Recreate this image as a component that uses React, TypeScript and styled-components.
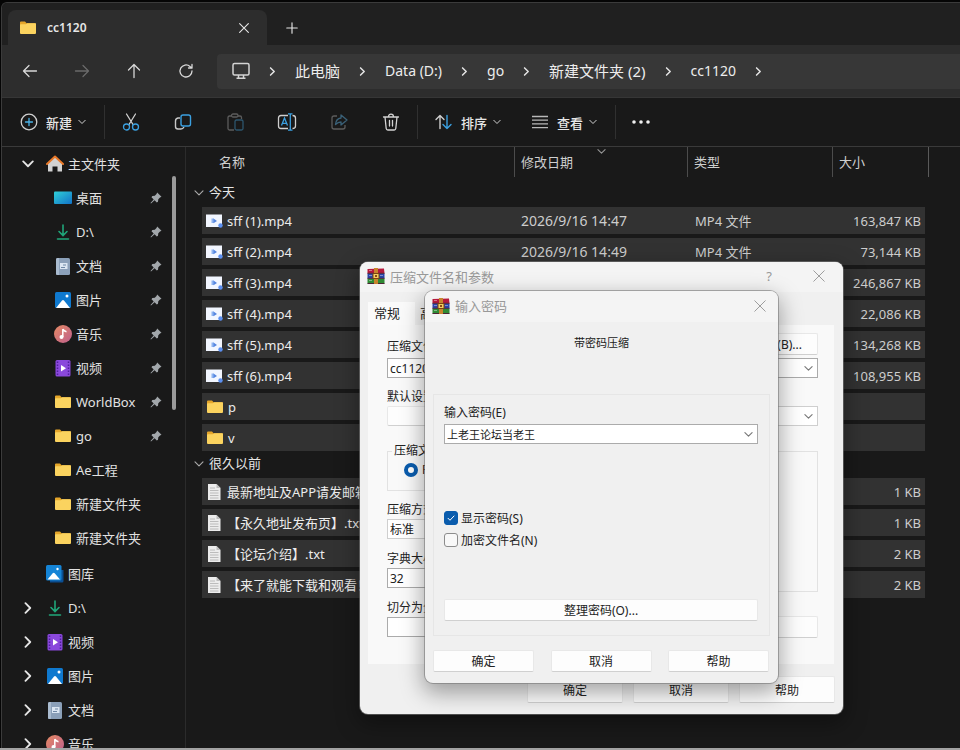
// App.tsx

import React from 'react';
import styled, { createGlobalStyle } from 'styled-components';

const GlobalStyle = createGlobalStyle`
  * {
    box-sizing: border-box;
  }

  body {
    margin: 0;
    background: #050505;
    font-family: 'Noto Sans', 'Noto Sans CJK SC', sans-serif;
    font-size: 13px;
    color: #e6e6e6;
  }

  button, input, select {
    font-family: inherit;
    font-size: inherit;
    color: inherit;
  }
`;

/* ---------- explorer window ---------- */

const Desktop = styled.div`
  position: relative;
  height: 100vh;
  padding: 2px 0 0 1px;
  border-bottom: 2px solid #a3a3a3;
  overflow: hidden;
`;

const Explorer = styled.div`
  display: flex;
  flex-direction: column;
  height: 100%;
  background: #191919;
  border-top: 1px solid #3b3b3b;
  border-left: 1px solid #3b3b3b;
  border-top-left-radius: 6px;
  overflow: hidden;
`;

const TabBar = styled.div`
  display: flex;
  flex: none;
  align-items: flex-end;
  height: 42px;
  padding-left: 6px;
  background: #202020;
`;

const Tab = styled.div`
  display: flex;
  align-items: center;
  width: 259px;
  height: 35px;
  padding: 0 16px 0 11px;
  gap: 10px;
  background: #2d2d2d;
  border-radius: 8px 8px 0 0;
  font-size: 12px;
  font-weight: 600;
`;

const TabTitle = styled.span`
  flex: 1;
`;

const PlainButton = styled.button`
  display: flex;
  align-items: center;
  justify-content: center;
  padding: 0;
  border: 0;
  background: none;
`;

const NewTabButton = styled(PlainButton)`
  width: 50px;
  height: 35px;
`;

const NavBar = styled.div`
  display: flex;
  flex: none;
  align-items: center;
  height: 53px;
  padding-left: 10px;
  gap: 16px;
  background: #2d2d2d;
  border-bottom: 1px solid #363636;
`;

const NavButton = styled(PlainButton)`
  width: 36px;
  height: 36px;
  color: ${(props) => (props.disabled ? '#6a6a6a' : '#d8d8d8')};
`;

const AddressBar = styled.nav`
  display: flex;
  flex: 1;
  align-items: center;
  height: 35px;
  margin-left: -3px;
  padding-left: 15px;
  gap: 18px;
  background: #373737;
  border-radius: 4px 0 0 4px;
`;

const Crumb = styled.a<{ $large?: boolean }>`
  color: #ededed;
  font-size: ${(props) => (props.$large ? '15px' : '14px')};
  line-height: 18px;
  text-decoration: none;
  white-space: nowrap;
`;

const Toolbar = styled.div`
  display: flex;
  flex: none;
  align-items: center;
  height: 49px;
  padding-left: 4px;
  border-bottom: 1px solid #3a3a3a;
`;

const ToolGroup = styled.div`
  display: flex;
  padding: 0 6px;
  gap: 16px;
`;

const ToolButton = styled(PlainButton)`
  width: 36px;
  height: 36px;
`;

const MenuButton = styled(PlainButton)`
  height: 36px;
  padding: 0 16px 0 14px;
  font-weight: 500;
`;

const MenuLabel = styled.span`
  margin: 0 6px 0 8px;
`;

const Divider = styled.div`
  width: 1px;
  height: 34px;
  margin: 0 2px;
  background: #303030;
`;

const Body = styled.div`
  display: flex;
  flex: 1;
  min-height: 0;
`;

const Sidebar = styled.aside`
  position: relative;
  flex: none;
  width: 184px;
  border-right: 1px solid #2b2b2b;
  overflow: hidden;
`;

const SideList = styled.ul`
  margin: 0 0 2px;
  padding: 0;
  list-style: none;
`;

const SideRow = styled.li<{ $nested?: boolean }>`
  display: flex;
  align-items: center;
  height: 34px;
  padding: 0 23px 0 ${(props) => (props.$nested ? '52px' : '20px')};
  gap: 4px;
`;

const Expander = styled.span`
  display: flex;
  width: 20px;
`;

const SideLink = styled.a`
  flex: 1;
  color: #e2e2e2;
  line-height: 18px;
  text-decoration: none;
  white-space: nowrap;
`;

const ScrollThumb = styled.div`
  position: absolute;
  top: 29px;
  right: 9px;
  width: 4px;
  height: 234px;
  border-radius: 2px;
  background: #9a9a9a;
`;

const Main = styled.main`
  flex: 1;
  min-width: 0;
  padding: 0 31px 0 8px;
  overflow: hidden;
`;

const FileTable = styled.table`
  width: 100%;
  table-layout: fixed;
  border-collapse: separate;
  border-spacing: 0;
`;

const HeadCell = styled.th<{ $width?: number; $first?: boolean; $last?: boolean }>`
  position: relative;
  width: ${(props) => (props.$width ? `${props.$width}px` : 'auto')};
  height: 30px;
  padding: 0 0 2px ${(props) => (props.$first ? '17px' : '6px')};
  border-right: ${(props) => (props.$last ? '0' : '1px solid #4c4c4c')};
  color: #cfcfcf;
  font-weight: 400;
  text-align: left;
`;

const GutterHead = styled.th<{ $width: number; $line?: boolean }>`
  width: ${(props) => props.$width}px;
  padding: 0;
  border-right: ${(props) => (props.$line ? '1px solid #5a5a5a' : '0')};
`;

const SortMark = styled.span`
  position: absolute;
  top: 0;
  left: 50%;
  display: flex;
  margin-left: -4px;
`;

const GroupCell = styled.td<{ $height: number }>`
  height: ${(props) => props.$height}px;
  padding: 0 0 6px;
  line-height: 17px;
  vertical-align: bottom;
`;

const GroupTitle = styled.div`
  display: flex;
  align-items: center;
  gap: 5px;
`;

const GutterCell = styled.td`
  padding: 0;
`;

const Cell = styled.td<{ $align?: string; $indent?: number; $size?: number }>`
  height: 31px;
  padding: 0 4px 0 ${(props) => props.$indent || 6}px;
  border-bottom: 4px solid #191919;
  background: #323232;
  color: #cdcdcd;
  font-size: ${(props) => props.$size || 13}px;
  line-height: 18px;
  text-align: ${(props) => props.$align || 'left'};
  white-space: nowrap;
  overflow: hidden;
`;

const FileName = styled.span`
  display: flex;
  align-items: center;
  gap: 4px;
  color: #ececec;
`;

/* ---------- dialogs ---------- */

const Dialog = styled.section<{ $x: number; $y: number; $width: number }>`
  position: absolute;
  top: ${(props) => props.$y}px;
  left: ${(props) => props.$x}px;
  width: ${(props) => props.$width}px;
  border-radius: 8px;
  background: #f0f0f0;
  color: #222;
  font-size: 12px;
  overflow: hidden;
  box-shadow: 0 0 0 1px rgba(120, 120, 120, 0.6), 0 8px 22px 2px rgba(0, 0, 0, 0.35);
`;

const DialogTitle = styled.header<{ $height: number }>`
  display: flex;
  align-items: center;
  height: ${(props) => props.$height}px;
  padding: 0 0 2px 7px;
  gap: 5px;
  background: #f4f4f4;
  color: #999;
  font-size: 13px;
`;

const TitleText = styled.h2`
  flex: 1;
  margin: 0;
  font-size: 13px;
  font-weight: 400;
`;

const TitleButton = styled(PlainButton)<{ $width: number }>`
  width: ${(props) => props.$width}px;
  height: 28px;
`;

const DialogTabs = styled.div`
  display: flex;
  padding: 10px 8px 0;
`;

const DialogTab = styled.button<{ $active?: boolean }>`
  width: ${(props) => (props.$active ? '47px' : 'auto')};
  height: 23px;
  margin-right: 5px;
  padding: 0 0 3px ${(props) => (props.$active ? '6px' : '0')};
  border: 0;
  background: ${(props) => (props.$active ? '#fafafa' : '#f0f0f0')};
  font-size: 13px;
  white-space: nowrap;
  text-align: left;
`;

const DialogPanel = styled.div`
  margin: 0 9px 0 8px;
  padding: 8px 16px 26px 19px;
  background: #f9f9f9;
`;

const FieldLine = styled.div`
  display: flex;
  align-items: flex-end;
  justify-content: space-between;
  margin-bottom: 3px;
`;

const Columns = styled.div`
  display: grid;
  grid-template-columns: 1fr 1fr;
  column-gap: 12px;
`;

const Column = styled.div`
  display: flex;
  flex-direction: column;
`;

const Label = styled.label<{ $top?: number; $bottom?: number }>`
  display: block;
  margin: ${(props) => props.$top || 0}px 0 ${(props) => props.$bottom || 1}px;
  line-height: 16px;
`;

const SelectBox = styled.div<{ $strong?: boolean }>`
  position: relative;
  display: flex;
  height: 20px;
  border: 1px solid ${(props) => (props.$strong ? '#ababab' : '#cfcfcf')};
  background: #fff;
`;

const Select = styled.select<{ $size?: number }>`
  width: 100%;
  padding: 0 20px 0 2px;
  border: 0;
  appearance: none;
  background: none;
  font-size: ${(props) => props.$size || 12}px;
`;

const SelectArrow = styled.span`
  position: absolute;
  top: 5px;
  right: 4px;
  display: flex;
  color: #777;
  pointer-events: none;
`;

const Fieldset = styled.fieldset<{ $height: number }>`
  height: ${(props) => props.$height}px;
  min-width: 0;
  margin: 17px 0 0;
  padding: 2px 16px 0;
  border: 1px solid #e2e2e2;
`;

const Legend = styled.legend`
  margin-left: -12px;
  padding: 0 2px;
  line-height: 16px;
`;

const RadioLabel = styled.label`
  display: flex;
  align-items: center;
  gap: 4px;
`;

const Radio = styled.input`
  appearance: none;
  width: 14px;
  height: 14px;
  margin: 0;
  border: 4px solid #0a5cad;
  border-radius: 50%;
  background: #fff;
`;

const DialogButton = styled.button<{ $width?: number; $height?: number }>`
  flex: none;
  width: ${(props) => (props.$width ? `${props.$width}px` : 'auto')};
  height: ${(props) => props.$height || 22}px;
  padding: 0 15px;
  border: 1px solid #e8e8e8;
  border-bottom-color: #d0d0d0;
  border-radius: 2px;
  background: #fdfdfd;
`;

const LowerButton = styled(DialogButton)`
  margin-top: 24px;
`;

const Buttons = styled.footer<{ $spread?: boolean }>`
  display: flex;
  justify-content: ${(props) => (props.$spread ? 'space-between' : 'flex-end')};
  gap: 10px;
  padding: ${(props) => (props.$spread ? '14px 9px 11px 8px' : '12px 8px 11px')};
`;

const Message = styled.p`
  height: 72px;
  margin: 0;
  padding-top: 12px;
  font-size: 11px;
  line-height: 18px;
  text-align: center;
`;

const PasswordBox = styled.div`
  display: flex;
  flex-direction: column;
  margin: 0 8px;
  padding: 10px 11px 14px 10px;
  border: 1px solid #e6e6e6;
`;

const Checks = styled.div`
  margin: 63px 0 48px;
`;

const CheckLabel = styled.label`
  display: flex;
  align-items: center;
  height: 22px;
  gap: 3px;
`;

const CheckBox = styled.span`
  position: relative;
  display: flex;
  color: #fff;

  svg {
    position: absolute;
    top: 3px;
    left: 3px;
    pointer-events: none;
  }
`;

const CheckInput = styled.input`
  appearance: none;
  width: 14px;
  height: 14px;
  margin: 0;
  border: 1px solid #8c8c8c;
  border-radius: 3px;
  background: #f8f8f8;

  &:checked {
    border-color: #0a5cad;
    background: #0a5cad;
  }
`;

/* ---------- icons ---------- */

const Stroke = ({ d, size = 16, color = 'currentColor', width = 1.3 }: any) => (
  <svg width={size} height={size} viewBox="0 0 16 16" fill="none" stroke={color} strokeWidth={width} strokeLinecap="round" strokeLinejoin="round">
    <path d={d} />
  </svg>
);

const Chevron = ({ dir = 'down', size = 8, width = 1.3, color = 'currentColor' }: any) => (
  <svg width={size} height={size} viewBox="0 0 8 8" fill="none" stroke={color} strokeWidth={width} strokeLinecap="round" strokeLinejoin="round">
    <path d={dir === 'down' ? 'M.8 2.3 4 5.5 7.2 2.3' : 'M2.3.8 5.5 4 2.3 7.2'} />
  </svg>
);

const FolderIcon = () => (
  <svg width="18" height="18" viewBox="0 0 18 18">
    <path d="M1 3.5q0-1 1-1h4l1.6 1.7H16q1 0 1 1V8H1z" fill="#e5a62a" />
    <path d="M1 6q0-.8.8-.8h5l1.500-1H16.200q.8 0 .8.800v9q0 1-1 1H2q-1 0-1-1z" fill="#fbd35f" />
  </svg>
);

const DesktopIcon = () => (
  <svg width="18" height="18" viewBox="0 0 18 18">
    <defs>
      <linearGradient id="desk" x1="0" y1="0" x2="1" y2="1">
        <stop offset="0" stopColor="#2fd0d8" />
        <stop offset="1" stopColor="#1272c8" />
      </linearGradient>
    </defs>
    <rect x="0" y="2.500" width="18" height="12.500" rx="1" fill="url(#desk)" />
  </svg>
);

const DownloadIcon = () => (
  <svg width="18" height="18" viewBox="0 0 18 18" fill="none" stroke="#20a67a" strokeWidth="1.600" strokeLinecap="round">
    <path d="M9 2v10M5 8.500 9 12.500l4-4M3.500 16h11" />
  </svg>
);

const DocumentIcon = () => (
  <svg width="18" height="18" viewBox="0 0 18 18">
    <rect x="2" y="1" width="14" height="17" rx="1.500" fill="#8ba0b9" />
    <path d="M2 2.500Q2 1 3.500 1H5v17H3.500Q2 18 2 16.500z" fill="#a9bbcf" />
    <path d="M6 6h7.500v6H6z" fill="#dbe6f2" />
    <path d="M7 10.500h4M9 8h3" stroke="#6f88a5" />
  </svg>
);

const PictureIcon = () => (
  <svg width="18" height="18" viewBox="0 0 18 18">
    <rect x="1" y="1" width="16" height="16" rx="1.500" fill="#0f79cf" />
    <path d="M2 17 8 9.500q1-1 2 0L16 17z" fill="#fff" />
    <circle cx="13" cy="5" r="1.500" fill="#fff" />
  </svg>
);

const GalleryIcon = () => (
  <svg width="18" height="18" viewBox="0 0 18 18">
    <path d="M4 5h13.500v11q0 1.500-1.500 1.500H4z" fill="#0b4f93" />
    <rect x="0" y="0" width="15.500" height="15.500" rx="1.500" fill="#1584d6" />
    <path d="M1.500 14.500 6.700 8.300q1-1 2 0l5.300 6.200z" fill="#fff" />
    <circle cx="11.500" cy="4" r="1.200" fill="#fff" />
  </svg>
);

const MusicIcon = () => (
  <svg width="18" height="18" viewBox="0 0 18 18">
    <defs>
      <linearGradient id="music" x1="0" y1="0" x2="1" y2="1">
        <stop offset="0" stopColor="#e58a63" />
        <stop offset="1" stopColor="#bf5f8d" />
      </linearGradient>
    </defs>
    <circle cx="9" cy="9" r="9" fill="url(#music)" />
    <circle cx="7.500" cy="12" r="2" fill="#fff" />
    <path d="M8.800 12V4.200q1 2 3.700 2.500" fill="none" stroke="#fff" strokeWidth="1.500" />
  </svg>
);

const VideoIcon = () => (
  <svg width="18" height="18" viewBox="0 0 18 18">
    <rect x="1.500" y="1" width="15" height="16.500" rx="1.500" fill="#8a48dc" />
    <path d="M3.500 2.500v14M14.500 2.500v14" stroke="#4f1f9a" strokeWidth="1.500" strokeDasharray="1.500 1.500" />
    <path d="M7 6v6.500l5-3.200z" fill="#fff" />
  </svg>
);

const HomeIcon = () => (
  <svg width="18" height="18" viewBox="0 0 18 18">
    <path d="M2 8 9 2l7 6v8.500h-4.500v-5h-5v5H2z" fill="#d2d2d2" />
    <path d="M1 9 9 1.500 17 9" fill="none" stroke="#e8792a" strokeWidth="2" strokeLinecap="round" strokeLinejoin="round" />
  </svg>
);

const PinIcon = () => (
  <svg width="12" height="12" viewBox="0 0 12 12" fill="#a2a7ab">
    <path d="M7.200.5 11.500 4.800 10 5.500 8.300 7.200l-.3 2.500L6.800 10.500 4.600 8.300 1 11.500.5 11 3.700 7.400 1.500 5.200 2.300 4l2.500-.3L6.500 2z" />
  </svg>
);

const Mp4Icon = () => (
  <svg width="17" height="16" viewBox="0 0 17 16">
    <rect x="0" y="1.500" width="16" height="12.500" fill="#f2f6ff" />
    <path d="M5.500 5.500h2.500v4.500H5.500z" fill="#8fb4f0" />
    <path d="M7.500 5.500v4.800l3.500-2.400z" fill="#5585e0" />
    <circle cx="14.500" cy="12.500" r="2.200" fill="#5b8ff0" />
  </svg>
);

const TextIcon = () => (
  <svg width="17" height="18" viewBox="0 0 17 18">
    <path d="M2 1h8.500L14.500 5v12H2z" fill="#ececec" />
    <path d="M10.500 1v4h4z" fill="#bcbcbc" />
    <path d="M4 5h5M4 7.500h8.500M4 10h8.500M4 12.500h8.500M4 15h8.500" stroke="#b0b0b0" strokeWidth=".8" />
  </svg>
);

const RarIcon = () => (
  <svg width="18" height="16" viewBox="0 0 18 16">
    <path d="M.5 1 17 .5 17.500 5.500H.5z" fill="#b51a3c" />
    <path d="M.5 5.500h17v5H.5z" fill="#2a44a8" />
    <path d="M.5 10.500h17v5H.5z" fill="#2f8a34" />
    <path d="M.5 5.300h17M.5 10.300h17M.5 15.500h17" stroke="#4c2434" />
    <path d="M2 2.500h3M2 7.500h3M2 12.500h3M13 7.500h3" stroke="#fff" strokeOpacity=".4" />
    <path d="M7 0h4v16H7z" fill="#c8842d" />
    <path d="M6 5.500h6v5H6z" fill="#f3cf62" stroke="#7c4513" />
    <path d="M8 7h2v2H8z" fill="#8b4b16" />
  </svg>
);

const MonitorIcon = () => (
  <svg width="18" height="18" viewBox="0 0 18 18" fill="none" stroke="#d4d4d4" strokeWidth="1.500">
    <rect x="1" y="1.500" width="16" height="11.500" rx="1.500" />
    <path d="M6.500 13v3M11.500 13v3M4.500 16.300h9" />
  </svg>
);

const NewIcon = () => (
  <svg width="18" height="18" viewBox="0 0 18 18" fill="none" strokeWidth="1.300">
    <circle cx="9" cy="9" r="7.800" stroke="#d0d0d0" />
    <path d="M9 5.500v7M5.500 9h7" stroke="#4cb4e8" strokeLinecap="round" />
  </svg>
);

const CutIcon = () => (
  <svg width="18" height="18" viewBox="0 0 18 18" fill="none" strokeWidth="1.300">
    <path d="M4.500 1 11 11.500M13.500 1 7 11.500" stroke="#d0d0d0" strokeLinecap="round" />
    <circle cx="4.500" cy="14" r="3" stroke="#3ba0e0" />
    <circle cx="13.500" cy="14" r="3" stroke="#3ba0e0" />
  </svg>
);

const CopyIcon = () => (
  <svg width="18" height="18" viewBox="0 0 18 18" fill="none" strokeWidth="1.400">
    <path d="M6 5H4Q1.500 5.500 1.500 8v5.500q0 2.500 2.500 2.500h3q2 0 3-2" stroke="#c8c8c8" />
    <rect x="7" y="2" width="9.500" height="11" rx="2" stroke="#3ba0e0" />
  </svg>
);

const PasteIcon = () => (
  <svg width="18" height="18" viewBox="0 0 18 18" fill="none" stroke="#5c5c5c" strokeWidth="1.300">
    <path d="M5.500 3H3.500Q2 3 2 4.500v11Q2 17 3.500 17H8M12 3h2q1.500 0 1.500 1.500V6" />
    <rect x="5.500" y="1" width="6.500" height="3" rx="1.500" />
    <rect x="9" y="7" width="8" height="10" rx="1.500" stroke="#2d566e" />
  </svg>
);

const RenameIcon = () => (
  <svg width="20" height="18" viewBox="0 0 20 18" fill="none" strokeWidth="1.300">
    <path d="M11 2.500H4Q1.500 2.500 1.500 5v8q0 2.500 2.500 2.500h7M15.500 2.500Q18.500 2.500 18.500 5v8q0 2.500-3 2.500" stroke="#cfcfcf" />
    <path d="M4.500 12.500 7.500 5l3 7.500M5.500 10.300h4M11 .8h4.500M11 17.200h4.500M13.300 1v16" stroke="#3ba0e0" />
  </svg>
);

const ShareIcon = () => (
  <svg width="18" height="18" viewBox="0 0 18 18" fill="none" strokeWidth="1.300" strokeLinejoin="round">
    <path d="M7 3H4Q2 3 2 5v9q0 2 2 2h9q2 0 2-2v-2" stroke="#5c5c5c" />
    <path d="M11 2v3Q6 5.500 5.500 11.500 8 9 11 9v3l6-5z" stroke="#3a6178" />
  </svg>
);

const DeleteIcon = () => (
  <svg width="18" height="18" viewBox="0 0 18 18" fill="none" stroke="#d4d4d4" strokeWidth="1.300" strokeLinecap="round">
    <path d="M1.500 4h15M6.500 4q0-2.800 2.500-2.800T11.500 4M3 4l1.200 11.500q.2 1.500 1.600 1.500h6.400q1.400 0 1.600-1.500L15 4M7.500 7.500v5.500M10.500 7.500v5.500" />
  </svg>
);

const SortIcon = () => (
  <svg width="19" height="18" viewBox="0 0 19 18" fill="none" strokeWidth="1.400" strokeLinecap="round" strokeLinejoin="round">
    <path d="M6 15.500V2.500M2 6.500l4-4 4 4" stroke="#cfcfcf" />
    <path d="M13 2.500v13M9 11.500l4 4 4-4" stroke="#3ba0e0" />
  </svg>
);

const ViewIcon = () => (
  <svg width="18" height="18" viewBox="0 0 18 18" stroke="#b8b8b8" strokeWidth="1.300">
    <path d="M1 3.500h16M1 7.200h16M1 10.900h16M1 14.600h16" />
  </svg>
);

const MoreIcon = () => (
  <svg width="18" height="18" viewBox="0 0 18 18" fill="#f0f0f0">
    <circle cx="2" cy="9" r="1.800" />
    <circle cx="9" cy="9" r="1.800" />
    <circle cx="16" cy="9" r="1.800" />
  </svg>
);

/* ---------- data ---------- */

const crumbs = [
  { name: '此电脑', large: true },
  { name: 'Data (D:)' },
  { name: 'go' },
  { name: '新建文件夹 (2)', large: true },
  { name: 'cc1120' },
];

const pinned = [
  { name: '桌面', icon: <DesktopIcon />, pin: true },
  { name: 'D:\\', icon: <DownloadIcon />, pin: true },
  { name: '文档', icon: <DocumentIcon />, pin: true },
  { name: '图片', icon: <PictureIcon />, pin: true },
  { name: '音乐', icon: <MusicIcon />, pin: true },
  { name: '视频', icon: <VideoIcon />, pin: true },
  { name: 'WorldBox', icon: <FolderIcon />, pin: true },
  { name: 'go', icon: <FolderIcon />, pin: true },
  { name: 'Ae工程', icon: <FolderIcon /> },
  { name: '新建文件夹', icon: <FolderIcon /> },
  { name: '新建文件夹', icon: <FolderIcon /> },
];

const places = [
  { name: '图库', icon: <GalleryIcon />, closed: false },
  { name: 'D:\\', icon: <DownloadIcon />, closed: true },
  { name: '视频', icon: <VideoIcon />, closed: true },
  { name: '图片', icon: <PictureIcon />, closed: true },
  { name: '文档', icon: <DocumentIcon />, closed: true },
  { name: '音乐', icon: <MusicIcon />, closed: true },
];

const groups = [
  {
    title: '今天',
    height: 30,
    files: [
      { name: 'sff (1).mp4', date: '2026/9/16 14:47', type: 'MP4 文件', size: '163,847 KB', icon: <Mp4Icon /> },
      { name: 'sff (2).mp4', date: '2026/9/16 14:49', type: 'MP4 文件', size: '73,144 KB', icon: <Mp4Icon /> },
      { name: 'sff (3).mp4', date: '', type: '', size: '246,867 KB', icon: <Mp4Icon /> },
      { name: 'sff (4).mp4', date: '', type: '', size: '22,086 KB', icon: <Mp4Icon /> },
      { name: 'sff (5).mp4', date: '', type: '', size: '134,268 KB', icon: <Mp4Icon /> },
      { name: 'sff (6).mp4', date: '', type: '', size: '108,955 KB', icon: <Mp4Icon /> },
      { name: 'p', date: '', type: '', size: '', icon: <FolderIcon /> },
      { name: 'v', date: '', type: '', size: '', icon: <FolderIcon /> },
    ],
  },
  {
    title: '很久以前',
    height: 23,
    files: [
      { name: '最新地址及APP请发邮箱', date: '', type: '', size: '1 KB', icon: <TextIcon /> },
      { name: '【永久地址发布页】.txt', date: '', type: '', size: '1 KB', icon: <TextIcon /> },
      { name: '【论坛介绍】.txt', date: '', type: '', size: '2 KB', icon: <TextIcon /> },
      { name: '【来了就能下载和观看！】.txt', date: '', type: '', size: '2 KB', icon: <TextIcon /> },
    ],
  },
];

/* ---------- parts ---------- */

const DropDown = ({ id, value, strong, size }: any) => (
  <SelectBox $strong={strong}>
    <Select id={id} $size={size}>
      <option>{value}</option>
    </Select>
    <SelectArrow>
      <Chevron size={9} width={1} />
    </SelectArrow>
  </SelectBox>
);

const SideNav = () => (
  <Sidebar>
    <SideList>
      <SideRow>
        <Expander>
          <Chevron size={12} width={1.2} />
        </Expander>
        <HomeIcon />
        <SideLink href="#home">主文件夹</SideLink>
      </SideRow>
      {pinned.map((item, index) => (
        <SideRow key={index} $nested>
          {item.icon}
          <SideLink href="#pinned">{item.name}</SideLink>
          {item.pin && <PinIcon />}
        </SideRow>
      ))}
    </SideList>
    <SideList>
      {places.map((item) => (
        <SideRow key={item.name}>
          <Expander>{item.closed && <Chevron dir="right" size={12} width={1.2} />}</Expander>
          {item.icon}
          <SideLink href="#place">{item.name}</SideLink>
        </SideRow>
      ))}
    </SideList>
    <ScrollThumb />
  </Sidebar>
);

const FileList = () => (
  <FileTable>
    <thead>
      <tr>
        <GutterHead $width={8} />
        <HeadCell $first>名称</HeadCell>
        <HeadCell $width={173}>
          修改日期
          <SortMark>
            <Chevron size={9} width={0.9} color="#999" />
          </SortMark>
        </HeadCell>
        <HeadCell $width={145}>类型</HeadCell>
        <HeadCell $width={92} $last>大小</HeadCell>
        <GutterHead $width={4} $line />
      </tr>
    </thead>
    <tbody>
      {groups.map((group) => (
        <React.Fragment key={group.title}>
          <tr>
            <GroupCell colSpan={6} $height={group.height}>
              <GroupTitle>
                <Chevron size={10} width={0.9} color="#aaa" />
                {group.title}
              </GroupTitle>
            </GroupCell>
          </tr>
          {group.files.map((file) => (
            <tr key={file.name}>
              <GutterCell />
              <Cell $indent={4}>
                <FileName>
                  {file.icon}
                  {file.name}
                </FileName>
              </Cell>
              <Cell $size={14}>{file.date}</Cell>
              <Cell $indent={7}>{file.type}</Cell>
              <Cell $align="right">{file.size}</Cell>
              <GutterCell />
            </tr>
          ))}
        </React.Fragment>
      ))}
    </tbody>
  </FileTable>
);

const ArchiveDialog = () => (
  <Dialog $x={360} $y={262} $width={483}>
    <DialogTitle $height={30}>
      <RarIcon />
      <TitleText>压缩文件名和参数</TitleText>
      <TitleButton $width={40} aria-label="帮助">?</TitleButton>
      <TitleButton $width={49} aria-label="关闭">
        <Stroke d="M2 2l12 12M14 2 2 14" size={14} width={1.1} />
      </TitleButton>
    </DialogTitle>
    <DialogTabs>
      <DialogTab $active>常规</DialogTab>
      <DialogTab>高级</DialogTab>
    </DialogTabs>
    <DialogPanel>
      <FieldLine>
        <label htmlFor="archive">压缩文件名(A)</label>
        <DialogButton>浏览(B)...</DialogButton>
      </FieldLine>
      <DropDown id="archive" value="cc1120.rar" strong />
      <Columns>
        <Column>
          <Label as="span" $top={11}>默认设置</Label>
          <DialogButton $height={20} aria-label="配置" />
        </Column>
        <Column>
          <Label htmlFor="update" $top={11}>更新方式(U)</Label>
          <DropDown id="update" value="" />
        </Column>
      </Columns>
      <Columns>
        <Column>
          <Fieldset $height={48}>
            <Legend>压缩文件格式</Legend>
            <RadioLabel>
              <Radio type="radio" name="format" defaultChecked />
              RAR
            </RadioLabel>
          </Fieldset>
          <Label htmlFor="method" $top={11}>压缩方式(C)</Label>
          <DropDown id="method" value="标准" />
          <Label htmlFor="dictionary" $top={12}>字典大小(I)</Label>
          <DropDown id="dictionary" value="32" strong />
          <Label htmlFor="split" $top={12}>切分为分卷(V)</Label>
          <DropDown id="split" value="" strong />
        </Column>
        <Column>
          <Fieldset $height={149}>
            <Legend>压缩选项</Legend>
          </Fieldset>
          <LowerButton>设置密码(P)...</LowerButton>
        </Column>
      </Columns>
    </DialogPanel>
    <Buttons>
      <DialogButton $width={96} $height={27}>确定</DialogButton>
      <DialogButton $width={96} $height={27}>取消</DialogButton>
      <DialogButton $width={96} $height={27}>帮助</DialogButton>
    </Buttons>
  </Dialog>
);

const PasswordDialog = () => (
  <Dialog $x={425} $y={291} $width={353}>
    <DialogTitle $height={31}>
      <RarIcon />
      <TitleText>输入密码</TitleText>
      <TitleButton $width={36} aria-label="关闭">
        <Stroke d="M2 2l12 12M14 2 2 14" size={14} width={1.1} />
      </TitleButton>
    </DialogTitle>
    <Message>带密码压缩</Message>
    <PasswordBox>
      <Label htmlFor="password" $bottom={3}>输入密码(E)</Label>
      <DropDown id="password" value="上老王论坛当老王" size={11} strong />
      <Checks>
        <CheckLabel>
          <CheckBox>
            <CheckInput type="checkbox" defaultChecked />
            <Stroke d="M2 8.500 6 12.500 14 4" size={8} width={2} />
          </CheckBox>
          显示密码(S)
        </CheckLabel>
        <CheckLabel>
          <CheckBox>
            <CheckInput type="checkbox" />
          </CheckBox>
          加密文件名(N)
        </CheckLabel>
      </Checks>
      <DialogButton>整理密码(O)...</DialogButton>
    </PasswordBox>
    <Buttons $spread>
      <DialogButton $width={101}>确定</DialogButton>
      <DialogButton $width={101}>取消</DialogButton>
      <DialogButton $width={101}>帮助</DialogButton>
    </Buttons>
  </Dialog>
);

const App = () => {
  return (
    <Desktop>
      <GlobalStyle />
      <Explorer>
        <TabBar>
          <Tab>
            <FolderIcon />
            <TabTitle>cc1120</TabTitle>
            <PlainButton aria-label="关闭标签页">
              <Stroke d="M3 3l10 10M13 3 3 13" size={14} />
            </PlainButton>
          </Tab>
          <NewTabButton aria-label="新标签页">
            <Stroke d="M8 2v12M2 8h12" size={14} />
          </NewTabButton>
        </TabBar>
        <NavBar>
          <NavButton aria-label="后退">
            <Stroke d="M14.500 8h-13M7 2.500 1.500 8 7 13.500" />
          </NavButton>
          <NavButton aria-label="前进" disabled>
            <Stroke d="M1.500 8h13M9 2.500 14.500 8 9 13.500" />
          </NavButton>
          <NavButton aria-label="向上">
            <Stroke d="M8 14.500v-13M2.500 7 8 1.500 13.500 7" />
          </NavButton>
          <NavButton aria-label="刷新">
            <Stroke d="M14 8A6 6 0 1 1 12 3.500L14 5M14 1.500V5h-3.500" />
          </NavButton>
          <AddressBar>
            <MonitorIcon />
            <Chevron dir="right" size={9} />
            {crumbs.map((crumb) => (
              <React.Fragment key={crumb.name}>
                <Crumb href="#path" $large={crumb.large}>{crumb.name}</Crumb>
                <Chevron dir="right" size={9} />
              </React.Fragment>
            ))}
          </AddressBar>
        </NavBar>
        <Toolbar>
          <MenuButton>
            <NewIcon />
            <MenuLabel>新建</MenuLabel>
            <Chevron width={0.9} />
          </MenuButton>
          <Divider />
          <ToolGroup>
            <ToolButton aria-label="剪切"><CutIcon /></ToolButton>
            <ToolButton aria-label="复制"><CopyIcon /></ToolButton>
            <ToolButton aria-label="粘贴"><PasteIcon /></ToolButton>
            <ToolButton aria-label="重命名"><RenameIcon /></ToolButton>
            <ToolButton aria-label="共享"><ShareIcon /></ToolButton>
            <ToolButton aria-label="删除"><DeleteIcon /></ToolButton>
          </ToolGroup>
          <Divider />
          <MenuButton>
            <SortIcon />
            <MenuLabel>排序</MenuLabel>
            <Chevron width={0.9} />
          </MenuButton>
          <MenuButton>
            <ViewIcon />
            <MenuLabel>查看</MenuLabel>
            <Chevron width={0.9} />
          </MenuButton>
          <Divider />
          <MenuButton aria-label="更多">
            <MoreIcon />
          </MenuButton>
        </Toolbar>
        <Body>
          <SideNav />
          <Main>
            <FileList />
          </Main>
        </Body>
      </Explorer>
      <ArchiveDialog />
      <PasswordDialog />
    </Desktop>
  );
};

export default App;
